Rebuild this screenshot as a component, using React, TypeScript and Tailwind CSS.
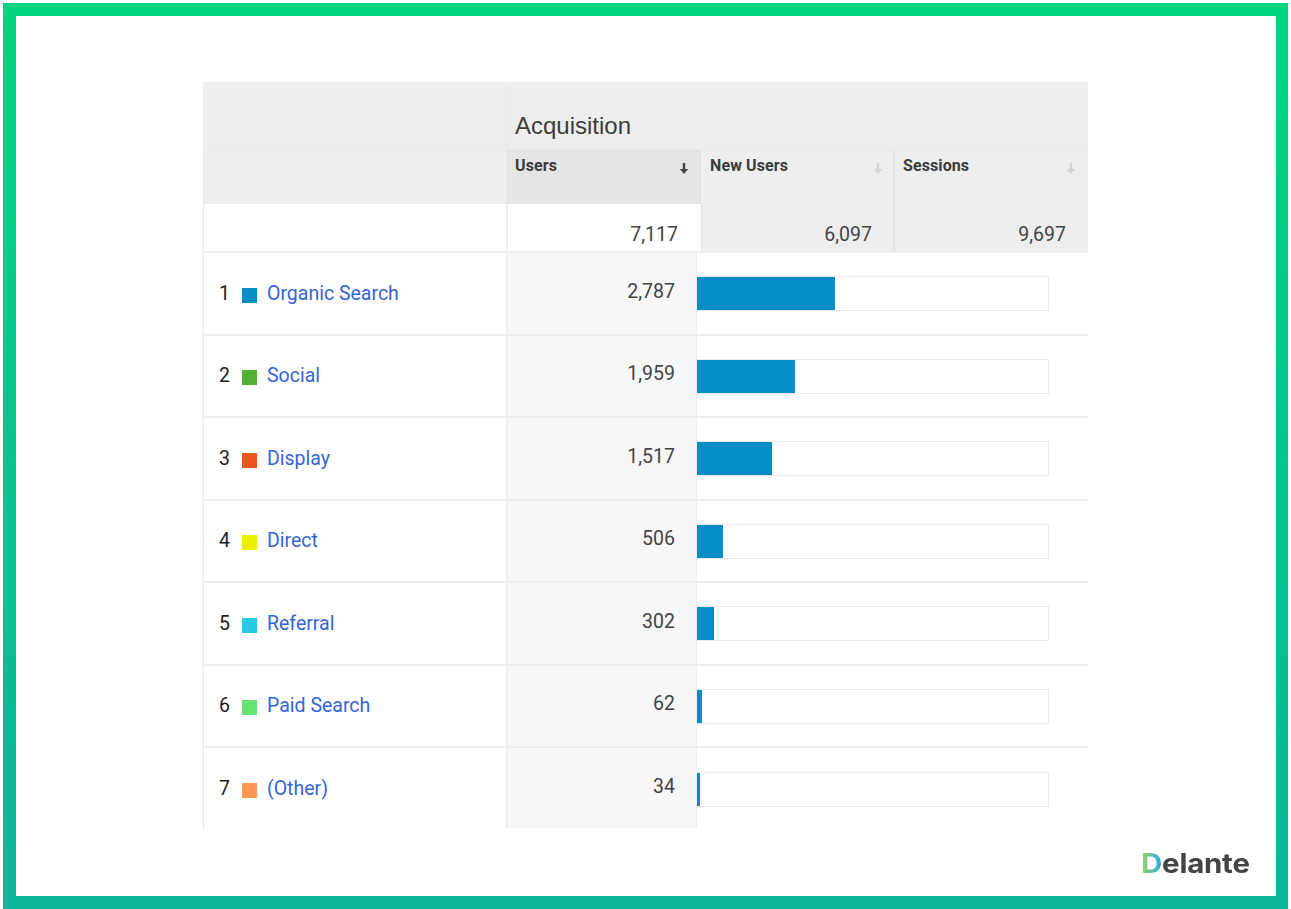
import React from "react";

const rows = [
  { n: 1, label: "Organic Search", color: "bg-[#058dc7]", value: "2,787", w: "w-[138px]" },
  { n: 2, label: "Social", color: "bg-[#50b432]", value: "1,959", w: "w-[98px]" },
  { n: 3, label: "Display", color: "bg-[#ed561b]", value: "1,517", w: "w-[75px]" },
  { n: 4, label: "Direct", color: "bg-[#edef00]", value: "506", w: "w-[26px]" },
  { n: 5, label: "Referral", color: "bg-[#24cbe5]", value: "302", w: "w-[17px]" },
  { n: 6, label: "Paid Search", color: "bg-[#64e572]", value: "62", w: "w-[5px]" },
  { n: 7, label: "(Other)", color: "bg-[#ff9655]", value: "34", w: "w-[3px]" },
];

function Arrow({ active }: { active?: boolean }) {
  return (
    <svg width="10" height="13" viewBox="0 0 9 12" className={active ? "text-[#444]" : "text-[#d2d2d2]"}>
      <path d="M3.4 1h2.2v5.5H8.4L4.5 11 .6 6.5h2.8z" fill="currentColor" />
    </svg>
  );
}

function HeadCell({ label, active, className }: { label: string; active?: boolean; className: string }) {
  return (
    <div className={`flex justify-between items-start pt-[7px] ${className}`}>
      <span className="text-[16px] leading-[18px] font-bold tracking-[0.1px] text-[#3b3b3b]">{label}</span>
      <span className="pt-[5px]"><Arrow active={active} /></span>
    </div>
  );
}

export default function App() {
  return (
    <div className="w-[1291px] h-[909px] bg-white pt-[3px] pl-[3px] pr-[3px] overflow-hidden font-['Roboto',sans-serif]">
      <div className="w-[1285px] h-[906px] bg-gradient-to-b from-[#00d47e] to-[#0cb79a] pt-[13px] pl-[13px] pr-[12px] pb-[13px]">
        <div className="w-full h-full bg-white pt-[66px] pl-[187px]">
          <div className="w-[885px] h-[748px] overflow-hidden">
            <div className="h-[68px] bg-[#eeeeee] flex border-b border-[#e9e9e9]">
              <div className="w-[303px]" />
              <div className="flex-1 border-l border-[#e8e8e8] pl-[8px] pt-[28px] text-[24px] leading-[32px] text-[#3d3d3d] font-['Liberation_Sans',sans-serif]">
                Acquisition
              </div>
            </div>
            <div className="h-[54px] flex bg-[#eeeeee]">
              <div className="w-[303px] border-l border-[#e8e8e8]" />
              <HeadCell label="Users" active className="w-[195px] pl-[9px] pr-[10px] bg-[#e5e5e5] border-r-2 border-[#e2e2e2]" />
              <HeadCell label="New Users" className="w-[194px] pl-[9px] pr-[10px] border-r-2 border-[#e4e4e4]" />
              <HeadCell label="Sessions" className="flex-1 pl-[8px] pr-[12px]" />
            </div>
            <div className="h-[49px] flex text-[19.5px] leading-[26px] text-[#444] border-b-2 border-[#eeeeee]">
              <div className="w-[303px] border-l border-[#e8e8e8] bg-white" />
              <div className="w-[195px] border-l-2 border-[#eeeeee] bg-white flex justify-end pt-[18px] pr-[23px]">7,117</div>
              <div className="w-[194px] bg-[#eeeeee] border-l border-[#e4e4e4] border-r-2 flex justify-end pt-[18px] pr-[21px]">6,097</div>
              <div className="flex-1 bg-[#eeeeee] flex justify-end pt-[18px] pr-[22px]">9,697</div>
            </div>
            {rows.map((r) => (
              <div key={r.n} className={`h-[82.5px] flex ${r.n === 7 ? "" : "border-b-2 border-[#eeeeee]"}`}>
                <div className={`w-[303px] border-l border-[#e8e8e8] flex items-center pl-[15px] text-[19.5px] ${r.n === 7 ? "pb-[2px]" : ""}`}>
                  <span className="w-[23px] text-[#222]">{r.n}</span>
                  <span className={`w-[15px] h-[15px] mt-[4px] ${r.color}`} />
                  <span className="ml-[10px] text-[#3465d6]">{r.label}</span>
                </div>
                <div className={`w-[191px] bg-[#f7f7f7] border-l-2 border-r border-[#eeeeee] flex items-center justify-end pr-[21px] text-[19.5px] text-[#444] ${r.n === 7 ? "h-[80px] pb-[2px]" : "pb-[4px]"}`}>
                  {r.value}
                </div>
                <div className="flex-1 flex items-center pt-[1px]">
                  <div className="w-[352px] h-[35px] border border-[#eaeaea] border-l-0 bg-white">
                    <div className={`h-full bg-[#058dc7] ${r.w}`} />
                  </div>
                </div>
              </div>
            ))}
          </div>
          <div className="w-[1047px] mt-[19px] flex justify-end">
            <div className="text-[27px] leading-[30px] font-bold tracking-[-0.2px] text-[#444] font-['Inter',sans-serif] scale-x-[1.09] origin-right">
              <span className="text-transparent bg-clip-text bg-gradient-to-r from-[#9ed24e] to-[#0fa8e4]">D</span>elante
            </div>
          </div>
        </div>
      </div>
    </div>
  );
}
